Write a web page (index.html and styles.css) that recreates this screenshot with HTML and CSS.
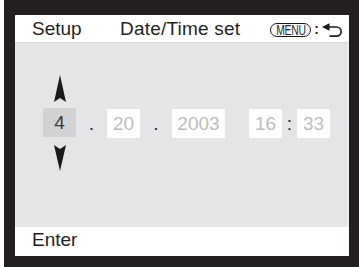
FILE: index.html
```html
<!DOCTYPE html>
<html>
<head>
<meta charset="utf-8">
<link rel="stylesheet" href="styles.css">
</head>
<body>
<div class="frame">
  <div class="panel">
    <div class="header">
      <span class="title-setup">Setup</span>
      <span class="title-main">Date/Time set</span>
      <span class="menu-pill"><span class="menu-text">MENU</span></span>
      <span class="menu-colon">:</span>
      <svg class="return-icon" width="20" height="15" viewBox="0 0 20 15">
        <path d="M0 4 L7.5 0.3 L7.5 7.7 Z" fill="#1a1a1a"/>
        <path d="M7 4 H14.5 A4.6 4.6 0 0 1 14.5 13.2 H7.5" fill="none" stroke="#1a1a1a" stroke-width="1.7"/>
      </svg>
    </div>
    <div class="body">
      <div class="row">
        <div class="col-active">
          <svg class="arrow up" width="12" height="27" viewBox="0 0 12 27">
            <path d="M6 0 L12 27 L6 23 L0 27 Z" fill="#1a1a1a"/>
          </svg>
          <div class="box active">4</div>
          <svg class="arrow down" width="12" height="26" viewBox="0 0 12 26">
            <path d="M0 0 L6 4 L12 0 L6 26 Z" fill="#1a1a1a"/>
          </svg>
        </div>
        <div class="sep sep-1">.</div>
        <div class="box">20</div>
        <div class="sep sep-2">.</div>
        <div class="box wide">2003</div>
        <div class="spacer"></div>
        <div class="box">16</div>
        <div class="sep sep-3">:</div>
        <div class="box">33</div>
      </div>
    </div>
    <div class="footer">Enter</div>
  </div>
</div>
</body>
</html>
```

FILE: styles.css
```css
html, body {
  margin: 0;
  padding: 0;
  background: #ffffff;
}
body {
  width: 359px;
  height: 267px;
  overflow: hidden;
  font-family: "Liberation Sans", Arial, sans-serif;
  color: #1f1f1f;
}
.frame {
  margin-left: 4px;
  width: 355px;
  height: 267px;
  box-sizing: border-box;
  background: #231f20;
  padding: 15px 10px 11px 11px;
}
.panel {
  width: 334px;
  height: 241px;
  display: flex;
  flex-direction: column;
}
.header {
  height: 28px;
  box-sizing: border-box;
  background: #ffffff;
  border-bottom: 1px solid #d9dadc;
  display: flex;
  align-items: center;
  font-size: 19px;
  line-height: 27px;
  padding-left: 17px;
}
.title-setup {
  width: 50px;
}
.title-main {
  margin-left: 38px;
  letter-spacing: 0.2px;
}
.menu-pill {
  margin-left: 30px;
  width: 41px;
  height: 14px;
  box-sizing: border-box;
  border: 1.3px solid #1a1a1a;
  border-radius: 7px;
  display: flex;
  align-items: center;
  justify-content: center;
  margin-top: 2px;
}
.menu-text {
  display: inline-block;
  font-size: 14px;
  line-height: 12px;
  transform: scaleX(0.74);
  letter-spacing: -0.3px;
}
.menu-colon {
  font-size: 14px;
  line-height: 14px;
  margin-left: 3px;
  margin-top: 1px;
  font-weight: bold;
}
.return-icon {
  margin-left: 3px;
  margin-top: 3px;
}
.body {
  flex: 1;
  background: #e4e5e7;
  border-right: 2px solid #ececee;
  box-sizing: border-box;
}
.row {
  display: flex;
  align-items: center;
  padding-left: 28px;
  padding-top: 32px;
}
.col-active {
  display: flex;
  flex-direction: column;
  align-items: center;
  width: 33px;
}
.arrow.up {
  margin-bottom: 6px;
}
.arrow.down {
  margin-top: 8px;
}
.box {
  width: 33px;
  height: 29px;
  background: #ffffff;
  color: #bdbdbd;
  font-size: 19px;
  line-height: 29px;
  text-align: center;
}
.box.wide {
  width: 53px;
}
.box.active {
  background: #d2d2d3;
  color: #3a3a3a;
}
.sep {
  height: 29px;
  font-size: 19px;
  line-height: 29px;
  text-align: center;
  color: #2a2a2a;
}
.sep-1 {
  width: 31px;
}
.sep-2 {
  width: 32px;
}
.sep-3 {
  width: 15px;
}
.spacer {
  width: 24px;
}
.footer {
  height: 29px;
  background: #ffffff;
  font-size: 19px;
  line-height: 25px;
  padding-left: 17px;
}
```
